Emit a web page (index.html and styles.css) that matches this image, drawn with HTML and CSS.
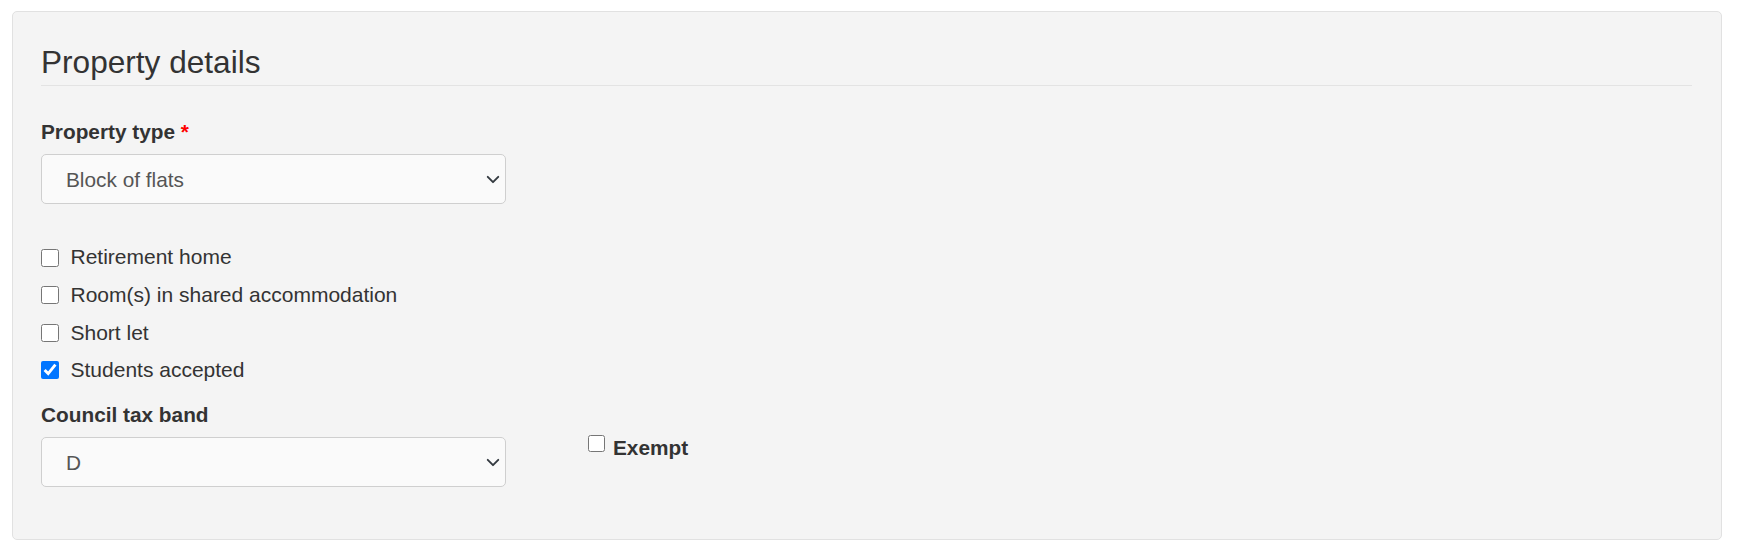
FILE: index.html
```html
<!DOCTYPE html>
<html lang="en">
<head>
<meta charset="utf-8">
<title>Property details</title>
<link rel="stylesheet" href="styles.css">
</head>
<body>
<form class="panel">
  <h2 class="legend">Property details</h2>

  <div class="field">
    <label class="field-label" for="ptype">Property type <span class="req">*</span></label>
    <div class="select-wrap">
      <select id="ptype" class="select">
        <option>Block of flats</option>
      </select>
      <svg class="chev" viewBox="0 0 16 10" aria-hidden="true"><path d="M2 2l6 6 6-6" fill="none" stroke="#343a40" stroke-width="2.2" stroke-linecap="round" stroke-linejoin="round"/></svg>
    </div>
  </div>

  <div class="checks">
    <label class="check-row"><input type="checkbox" class="cb"><span>Retirement home</span></label>
    <label class="check-row"><input type="checkbox" class="cb"><span>Room(s) in shared accommodation</span></label>
    <label class="check-row"><input type="checkbox" class="cb"><span>Short let</span></label>
    <label class="check-row"><input type="checkbox" class="cb" checked><span>Students accepted</span></label>
  </div>

  <div class="tax-row">
    <div class="field tax-field">
      <label class="field-label" for="band">Council tax band</label>
      <div class="select-wrap">
        <select id="band" class="select">
          <option>D</option>
        </select>
        <svg class="chev" viewBox="0 0 16 10" aria-hidden="true"><path d="M2 2l6 6 6-6" fill="none" stroke="#343a40" stroke-width="2.2" stroke-linecap="round" stroke-linejoin="round"/></svg>
      </div>
    </div>
    <label class="exempt"><input type="checkbox" class="cb cb-exempt"><span>Exempt</span></label>
  </div>
</form>
</body>
</html>
```

FILE: styles.css
```css
html, body {
  margin: 0;
  padding: 0;
  background: #ffffff;
}

body {
  font-family: "Liberation Sans", Arial, sans-serif;
  font-size: 20.8px;
  line-height: 1.5;
  color: #333333;
}

.panel {
  margin: 11px 15px 0 12px;
  padding: 32px 29px 52px 28px;
  background: #f4f4f4;
  border: 1px solid #e1e1e1;
  border-radius: 5px;
}

.legend {
  margin: 0;
  padding: 0 0 3px;
  font-size: 31.6px;
  font-weight: normal;
  line-height: 37.7px;
  color: #333333;
  border-bottom: 1px solid #e3e3e3;
}

.field {
  width: 465px;
}

.legend + .field {
  margin-top: 30px;
}

.field-label {
  display: block;
  font-weight: bold;
  line-height: 31.2px;
  margin-bottom: 7.4px;
  color: #333333;
}

.tax-field .field-label {
  margin-bottom: 6.8px;
}

.req {
  color: #ff0000;
}

.select-wrap {
  position: relative;
}

.select {
  display: block;
  width: 100%;
  height: 50px;
  box-sizing: border-box;
  margin: 0;
  padding: 0 44px 0 24px;
  font-family: "Liberation Sans", Arial, sans-serif;
  font-size: 20.8px;
  color: #555555;
  background: #fafafa;
  border: 1px solid #cfcfcf;
  border-radius: 5px;
  appearance: none;
  -webkit-appearance: none;
  outline: none;
}

.chev {
  position: absolute;
  right: 6.5px;
  top: 21px;
  width: 14px;
  height: 9px;
  pointer-events: none;
}

.checks {
  display: flex;
  flex-direction: column;
  margin-top: 34px;
}

.check-row {
  display: flex;
  align-items: center;
  height: 37.6px;
  line-height: 31.2px;
  font-size: 21px;
  gap: 11.5px;
  cursor: pointer;
}

.cb {
  width: 18px;
  height: 18px;
  margin: 1px 0 0;
  flex: none;
  accent-color: #0075ff;
}

.tax-row {
  display: flex;
  align-items: flex-start;
  gap: 82px;
  margin-top: 10.5px;
}

.exempt {
  display: flex;
  align-items: flex-start;
  gap: 8px;
  margin-top: 33px;
  font-weight: bold;
  line-height: 31.2px;
  cursor: pointer;
}

.cb-exempt {
  width: 17px;
  height: 17px;
  margin-top: 3px;
}
```
